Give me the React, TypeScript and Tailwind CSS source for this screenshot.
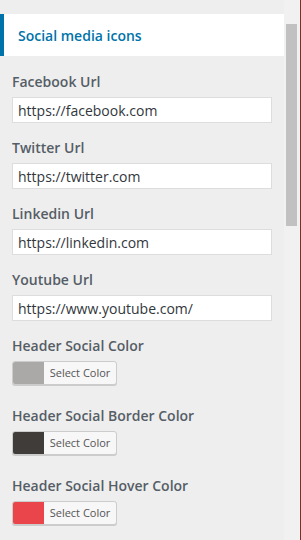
import React from 'react';

const urlFields = [
  { label: 'Facebook Url', value: 'https://facebook.com' },
  { label: 'Twitter Url', value: 'https://twitter.com' },
  { label: 'Linkedin Url', value: 'https://linkedin.com' },
  { label: 'Youtube Url', value: 'https://www.youtube.com/' },
];

const colorFields = [
  { label: 'Header Social Color', color: '#aaa9a7' },
  { label: 'Header Social Border Color', color: '#403c39' },
  { label: 'Header Social Hover Color', color: '#e9454a' },
];

export default function App() {
  return (
    <div className="flex h-[540px] w-[301px] overflow-hidden bg-[#eeeeee] font-['Open_Sans',sans-serif]">
      {/* Panel content */}
      <div className="flex w-[284px] flex-col pt-[14px]">
        <div className="flex h-[42px] shrink-0 items-center border-l-4 border-[#0073aa] bg-white pl-[14px]">
          <h3 className="text-[14px] font-semibold text-[#0073aa]">Social media icons</h3>
        </div>

        <div className="flex shrink-0 flex-col px-3 pt-[16px]">
          {urlFields.map((f) => (
            <div key={f.label} className="mb-[15px] flex flex-col gap-[5px]">
              <label className="text-[14px] leading-[20px] font-semibold text-[#555d66]">{f.label}</label>
              <input
                type="text"
                defaultValue={f.value}
                className="h-[26px] w-[260px] border border-[#dddddd] bg-white px-[5px] text-[14px] text-[#32373c] outline-none"
              />
            </div>
          ))}

          {colorFields.map((f) => (
            <div key={f.label} className="mb-[21px] flex flex-col gap-[5px]">
              <label className="text-[14px] leading-[20px] font-semibold text-[#555d66]">{f.label}</label>
              <button className="flex h-[24px] w-[105px] overflow-hidden rounded-[3px] border border-[#cccccc] bg-[#f7f7f7] shadow-[0_1px_0_#cccccc]">
                <span className="h-full w-[31px]" style={{ backgroundColor: f.color }} />
                <span className="flex h-full flex-1 items-center justify-center text-[11px] text-[#555555]">
                  Select Color
                </span>
              </button>
            </div>
          ))}
        </div>
      </div>

      {/* Scrollbar */}
      <div className="flex w-[16px] flex-col bg-[#f1f1f1] pl-[2px] pt-[24px]">
        <div className="h-[202px] w-[11px] shrink-0 bg-[#c1c1c1]" />
      </div>
      <div className="w-[1px] bg-[#7a2f25]" />
    </div>
  );
}
